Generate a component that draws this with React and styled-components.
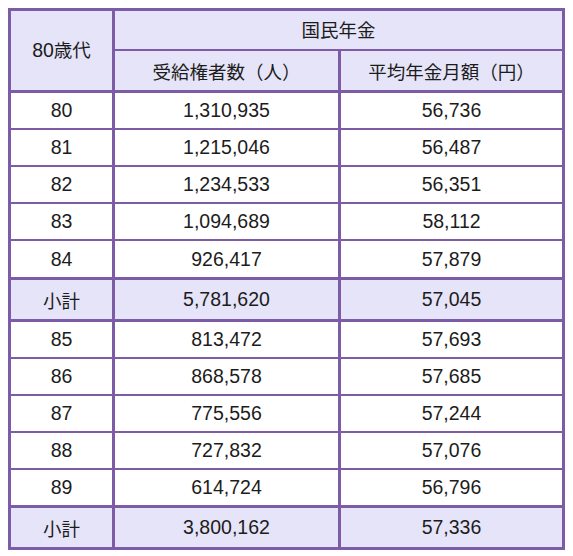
import React from "react";
import styled, { createGlobalStyle } from "styled-components";

const GlobalStyle = createGlobalStyle`
  body {
    margin: 0;
    padding: 8px;
    background: #ffffff;
  }
`;

const border = "#7d5ba6";
const headBg = "#e6e4f8";

const Table = styled.table`
  border-collapse: separate;
  border-spacing: 0;
  width: 557px;
  border: 3px solid ${border};
  table-layout: fixed;
  font-family: "Liberation Sans", Arial, "Noto Sans CJK JP", sans-serif;
  color: #1c1c1c;
`;

const Cell = styled.td`
  box-sizing: border-box;
  padding: 0;
  text-align: center;
  vertical-align: middle;
  height: ${(p) => p.$h}px;
  font-size: ${(p) => (p.$jp ? 18.5 : 19.5)}px;
  background: ${(p) => (p.$shade ? headBg : "#ffffff")};
  border-right: ${(p) => (p.$last ? "none" : `3px solid ${border}`)};
  border-bottom: ${(p) => (p.$bottom ? `${p.$bottom}px solid ${border}` : "none")};
`;

const HeadCell = styled(Cell).attrs({ as: "th" })`
  font-weight: normal;
  padding-bottom: ${(p) => p.$lift || 0}px;
`;

const Num = styled.span`
  font-size: 19.5px;
`;

const groups = [
  {
    rows: [
      ["80", "1,310,935", "56,736"],
      ["81", "1,215,046", "56,487"],
      ["82", "1,234,533", "56,351"],
      ["83", "1,094,689", "58,112"],
      ["84", "926,417", "57,879"],
    ],
    total: ["小計", "5,781,620", "57,045"],
  },
  {
    rows: [
      ["85", "813,472", "57,693"],
      ["86", "868,578", "57,685"],
      ["87", "775,556", "57,244"],
      ["88", "727,832", "57,076"],
      ["89", "614,724", "56,796"],
    ],
    total: ["小計", "3,800,162", "57,336"],
  },
];

const DataRow = ({ row, h, bottom, shade, jpFirst }) => (
  <tr>
    <Cell $h={h} $bottom={bottom} $shade={shade} $jp={jpFirst}>
      {row[0]}
    </Cell>
    <Cell $h={h} $bottom={bottom} $shade={shade}>
      {row[1]}
    </Cell>
    <Cell $h={h} $bottom={bottom} $shade={shade} $last>
      {row[2]}
    </Cell>
  </tr>
);

export default function App() {
  return (
    <>
      <GlobalStyle />
      <Table>
        <colgroup>
          <col style={{ width: 104 }} />
          <col style={{ width: 226 }} />
          <col style={{ width: 221 }} />
        </colgroup>
        <thead>
          <tr>
            <HeadCell rowSpan={2} $shade $bottom={3} $jp $h={40} $lift={4}>
              <Num>80</Num>歳代
            </HeadCell>
            <HeadCell colSpan={2} $shade $bottom={2} $jp $last $h={40} $lift={3}>
              国民年金
            </HeadCell>
          </tr>
          <tr>
            <HeadCell $shade $bottom={3} $jp $h={42}>
              受給権者数（人）
            </HeadCell>
            <HeadCell $shade $bottom={3} $jp $last $h={42}>
              平均年金月額（円）
            </HeadCell>
          </tr>
        </thead>
        <tbody>
          {groups.map((g, gi) => (
            <React.Fragment key={gi}>
              {g.rows.map((r, i) => {
                const lastRow = i === g.rows.length - 1;
                return (
                  <DataRow
                    key={r[0]}
                    row={r}
                    h={lastRow ? (gi === 0 ? 39 : 38) : 37}
                    bottom={lastRow ? 3 : 2}
                  />
                );
              })}
              <DataRow
                row={g.total}
                h={gi === 0 ? 42 : 39}
                bottom={gi === 0 ? 3 : 0}
                shade
                jpFirst
              />
            </React.Fragment>
          ))}
        </tbody>
      </Table>
    </>
  );
}
